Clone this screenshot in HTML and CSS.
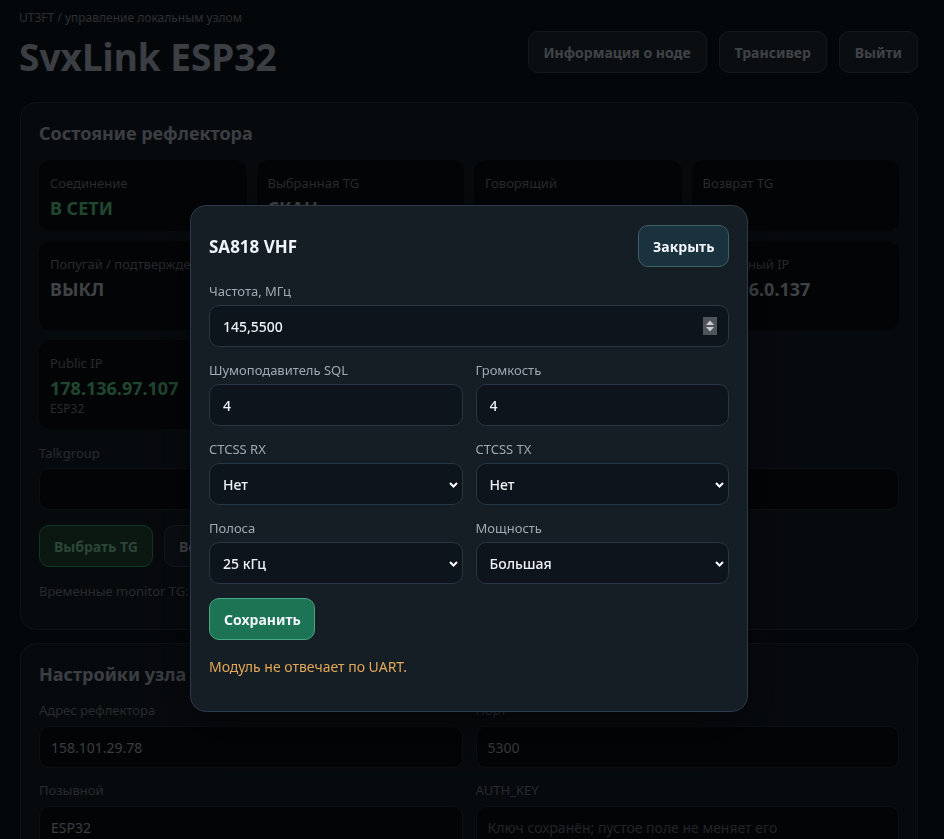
FILE: index.html
```html
<!DOCTYPE html>
<html lang="ru">
<head>
  <meta charset="UTF-8" />
  <meta name="viewport" content="width=device-width, initial-scale=1.0" />
  <title>SvxLink ESP32</title>
  <link rel="stylesheet" href="styles.css">
</head>
<body>
  <div class="page">
    <header class="top">
      <div class="brand">
        <div class="crumb">UT3FT / управление локальным узлом</div>
        <h1>SvxLink ESP32</h1>
      </div>
      <nav class="top-actions">
        <button class="btn">Информация о ноде</button>
        <button class="btn">Трансивер</button>
        <button class="btn">Выйти</button>
      </nav>
    </header>

    <section class="card">
      <h2>Состояние рефлектора</h2>
      <div class="stats">
        <div class="tile">
          <div class="tile-label">Соединение</div>
          <div class="tile-value ok">В СЕТИ</div>
        </div>
        <div class="tile">
          <div class="tile-label">Выбранная TG</div>
          <div class="tile-value">СКАН</div>
        </div>
        <div class="tile">
          <div class="tile-label">Говорящий</div>
          <div class="tile-value">никого</div>
        </div>
        <div class="tile">
          <div class="tile-label">Возврат TG</div>
          <div class="tile-value">—</div>
        </div>

        <div class="tile">
          <div class="tile-label">Попугай / подтверждение</div>
          <div class="tile-value">ВЫКЛ</div>
        </div>
        <div class="tile">
          <div class="tile-label">Monitor TG</div>
          <div class="tile-value">нет</div>
        </div>
        <div class="tile">
          <div class="tile-label">Аптайм</div>
          <div class="tile-value">2ч 14м</div>
        </div>
        <div class="tile">
          <div class="tile-label">Локальный IP</div>
          <div class="tile-value">172.16.0.137</div>
          <div class="tile-sub">Wi-Fi</div>
        </div>

        <div class="tile">
          <div class="tile-label">Public IP</div>
          <div class="tile-value ok">178.136.97.107</div>
          <div class="tile-sub">ESP32</div>
        </div>
        <div class="tile">
          <div class="tile-label">Версия</div>
          <div class="tile-value">1.0.4</div>
          <div class="tile-sub">прошивка</div>
        </div>
      </div>

      <label class="lbl" for="tg">Talkgroup</label>
      <input class="inp" id="tg" type="text" />
      <div class="btn-row">
        <button class="btn btn-green">Выбрать TG</button>
        <button class="btn">Вернуть TG по умолчанию</button>
        <button class="btn">Добавить monitor</button>
        <button class="btn">Включить попугая</button>
      </div>
      <p class="hint">Временные monitor TG: нет</p>
    </section>

    <section class="card">
      <h2>Настройки узла</h2>
      <div class="form-grid">
        <div class="field">
          <label class="lbl">Адрес рефлектора</label>
          <input class="inp" type="text" value="158.101.29.78" />
        </div>
        <div class="field">
          <label class="lbl">Порт</label>
          <input class="inp" type="text" value="5300" />
        </div>
        <div class="field">
          <label class="lbl">Позывной</label>
          <input class="inp" type="text" value="ESP32" />
        </div>
        <div class="field">
          <label class="lbl">AUTH_KEY</label>
          <input class="inp" type="password" placeholder="Ключ сохранён; пустое поле не меняет его" />
        </div>
      </div>
    </section>
  </div>

  <div class="backdrop">
    <div class="modal">
      <div class="modal-head">
        <h3>SA818 VHF</h3>
        <button class="btn btn-close">Закрыть</button>
      </div>

      <div class="modal-grid">
        <div class="m-field wide">
          <label class="m-lbl">Частота, МГц</label>
          <div class="ctl">
            <input class="m-inp" type="text" value="145,5500" />
            <span class="spin">
              <svg width="14" height="18" viewBox="0 0 14 18"><rect width="14" height="18" fill="#50555a"/><path d="M3 8 L7 3.5 L11 8 Z" fill="#c9cdd1"/><path d="M3 10 L7 14.5 L11 10 Z" fill="#c9cdd1"/></svg>
            </span>
          </div>
        </div>
        <div class="m-field">
          <label class="m-lbl">Шумоподавитель SQL</label>
          <input class="m-inp" type="text" value="4" />
        </div>
        <div class="m-field">
          <label class="m-lbl">Громкость</label>
          <input class="m-inp" type="text" value="4" />
        </div>
        <div class="m-field">
          <label class="m-lbl">CTCSS RX</label>
          <div class="ctl">
            <select class="m-inp"><option>Нет</option></select>
            <svg class="chev" width="9" height="6" viewBox="0 0 9 6"><path d="M1 1 L4.5 4.5 L8 1" fill="none" stroke="#fff" stroke-width="2"/></svg>
          </div>
        </div>
        <div class="m-field">
          <label class="m-lbl">CTCSS TX</label>
          <div class="ctl">
            <select class="m-inp"><option>Нет</option></select>
            <svg class="chev" width="9" height="6" viewBox="0 0 9 6"><path d="M1 1 L4.5 4.5 L8 1" fill="none" stroke="#fff" stroke-width="2"/></svg>
          </div>
        </div>
        <div class="m-field">
          <label class="m-lbl">Полоса</label>
          <div class="ctl">
            <select class="m-inp"><option>25 кГц</option></select>
            <svg class="chev" width="9" height="6" viewBox="0 0 9 6"><path d="M1 1 L4.5 4.5 L8 1" fill="none" stroke="#fff" stroke-width="2"/></svg>
          </div>
        </div>
        <div class="m-field">
          <label class="m-lbl">Мощность</label>
          <div class="ctl">
            <select class="m-inp"><option>Большая</option></select>
            <svg class="chev" width="9" height="6" viewBox="0 0 9 6"><path d="M1 1 L4.5 4.5 L8 1" fill="none" stroke="#fff" stroke-width="2"/></svg>
          </div>
        </div>
      </div>

      <button class="btn btn-save">Сохранить</button>
      <p class="m-status">Модуль не отвечает по UART.</p>
    </div>
  </div>
</body>
</html>
```

FILE: styles.css
```css
*, *::before, *::after { box-sizing: border-box; }
html, body { margin: 0; padding: 0; }
body {
  font-family: "Noto Sans", "Open Sans", sans-serif;
  background-color: #0d151d;
  color: #c9d1d9;
  font-size: 14px;
}
.page { padding: 9px 26px 40px 19px; }

/* header */
.top { display: flex; justify-content: space-between; align-items: flex-start; }
.crumb { font-size: 12px; line-height: 18px; color: #7c8691; }
.top h1 {
  margin: 7px 0 0;
  font-size: 37px;
  line-height: 46px;
  font-weight: 700;
  color: #a8b3bd;
}
.top-actions { display: flex; gap: 12px; margin-top: 22px; }

.btn {
  font-family: inherit;
  font-size: 14px;
  font-weight: 700;
  height: 42px;
  padding: 0 14px;
  border-radius: 10px;
  background-color: #1d2833;
  border: 1px solid #3a4855;
  color: #b6c0ca;
  cursor: pointer;
}
.top-actions .btn { padding: 0 15px; }
.btn-green { background-color: #1f4633; border-color: #3a9964; color: #7cc59b; }

/* cards */
.card {
  margin: 22px 0 0 1px;
  padding: 18px;
  background-color: #151d27;
  border: 1px solid #2a3643;
  border-radius: 16px;
}
.card + .card { margin-top: 13px; }
.card h2 {
  margin: 0 0 15px;
  font-size: 18px;
  line-height: 24px;
  color: #a8b3bd;
}

.stats { display: grid; grid-template-columns: repeat(4, 1fr); gap: 10px 10px; }
.tile {
  padding: 15px 11px 12px;
  background-color: #080d12;
  border-radius: 12px;
  min-width: 0;
}
.tile-label { font-size: 13px; line-height: 16px; color: #6f7984; white-space: nowrap; }
.tile-value { margin-top: 6px; font-size: 18px; line-height: 22px; font-weight: 700; color: #b3bcc4; }
.tile-value.ok { color: #5fc887; }
.tile-sub { margin-top: 2px; font-size: 12px; line-height: 16px; color: #6f7984; }

.lbl { display: block; font-size: 13px; line-height: 16px; color: #6f7984; margin: 16px 0 7px; }
.inp {
  display: block;
  width: 100%;
  height: 42px;
  padding: 0 11px;
  font-family: inherit;
  font-size: 14px;
  color: #a3aeb8;
  background-color: #080d12;
  border: 1px solid #222d38;
  border-radius: 10px;
}
.inp::placeholder { color: #5f6873; }
.btn-row { display: flex; gap: 11px; margin-top: 15px; }
.hint { margin: 16px 0 12px; font-size: 13px; line-height: 16px; color: #6f7984; }

.form-grid { display: grid; grid-template-columns: 1fr 1fr; gap: 13px 13px; }
.field .lbl { margin: 1px 0 8px; }

/* modal */
.backdrop {
  position: fixed;
  inset: 0;
  background-color: rgba(0, 0, 0, 0.65);
  display: flex;
  justify-content: center;
  align-items: flex-start;
  padding: 205px 6px 0 0;
}
.modal {
  width: 558px;
  padding: 19px 18px 18px;
  background-color: #151d25;
  border: 1px solid #2c3b47;
  border-radius: 16px;
  box-shadow: 0 20px 50px rgba(0, 0, 0, 0.45);
}
.modal-head { display: flex; justify-content: space-between; align-items: center; }
.modal-head h3 { margin: 0; font-size: 17px; font-weight: 700; color: #f0f4f8; }
.btn-close {
  font-size: 14px;
  padding: 0 14px;
  width: 91px;
  background-color: #19323d;
  border-color: #3c5f6b;
  color: #f0f4f8;
}

.modal-grid { display: grid; grid-template-columns: 1fr 1fr; gap: 14px 13px; margin-top: 15px; }
.m-field.wide { grid-column: 1 / 3; }
.m-lbl { display: block; font-size: 13px; line-height: 18px; color: #a0a9b2; margin-bottom: 5px; }
.ctl { position: relative; }
.m-inp {
  display: block;
  width: 100%;
  height: 42px;
  padding: 0 13px;
  font-family: inherit;
  font-size: 14px;
  font-weight: 500;
  color: #eef2f6;
  background-color: #0d141b;
  border: 1px solid #273744;
  border-radius: 10px;
  appearance: none;
  -webkit-appearance: none;
  outline: none;
}
.spin { position: absolute; right: 12px; top: 12px; line-height: 0; }
.chev { position: absolute; right: 5px; top: 19px; }

.btn-save {
  margin-top: 14px;
  font-size: 14px;
  width: 106px;
  background-color: #1c7455;
  border-color: #4aa582;
  color: #f0f4f8;
}
.m-status { margin: 17px 0 16px; font-size: 14px; line-height: 20px; color: #e3a857; }
```
